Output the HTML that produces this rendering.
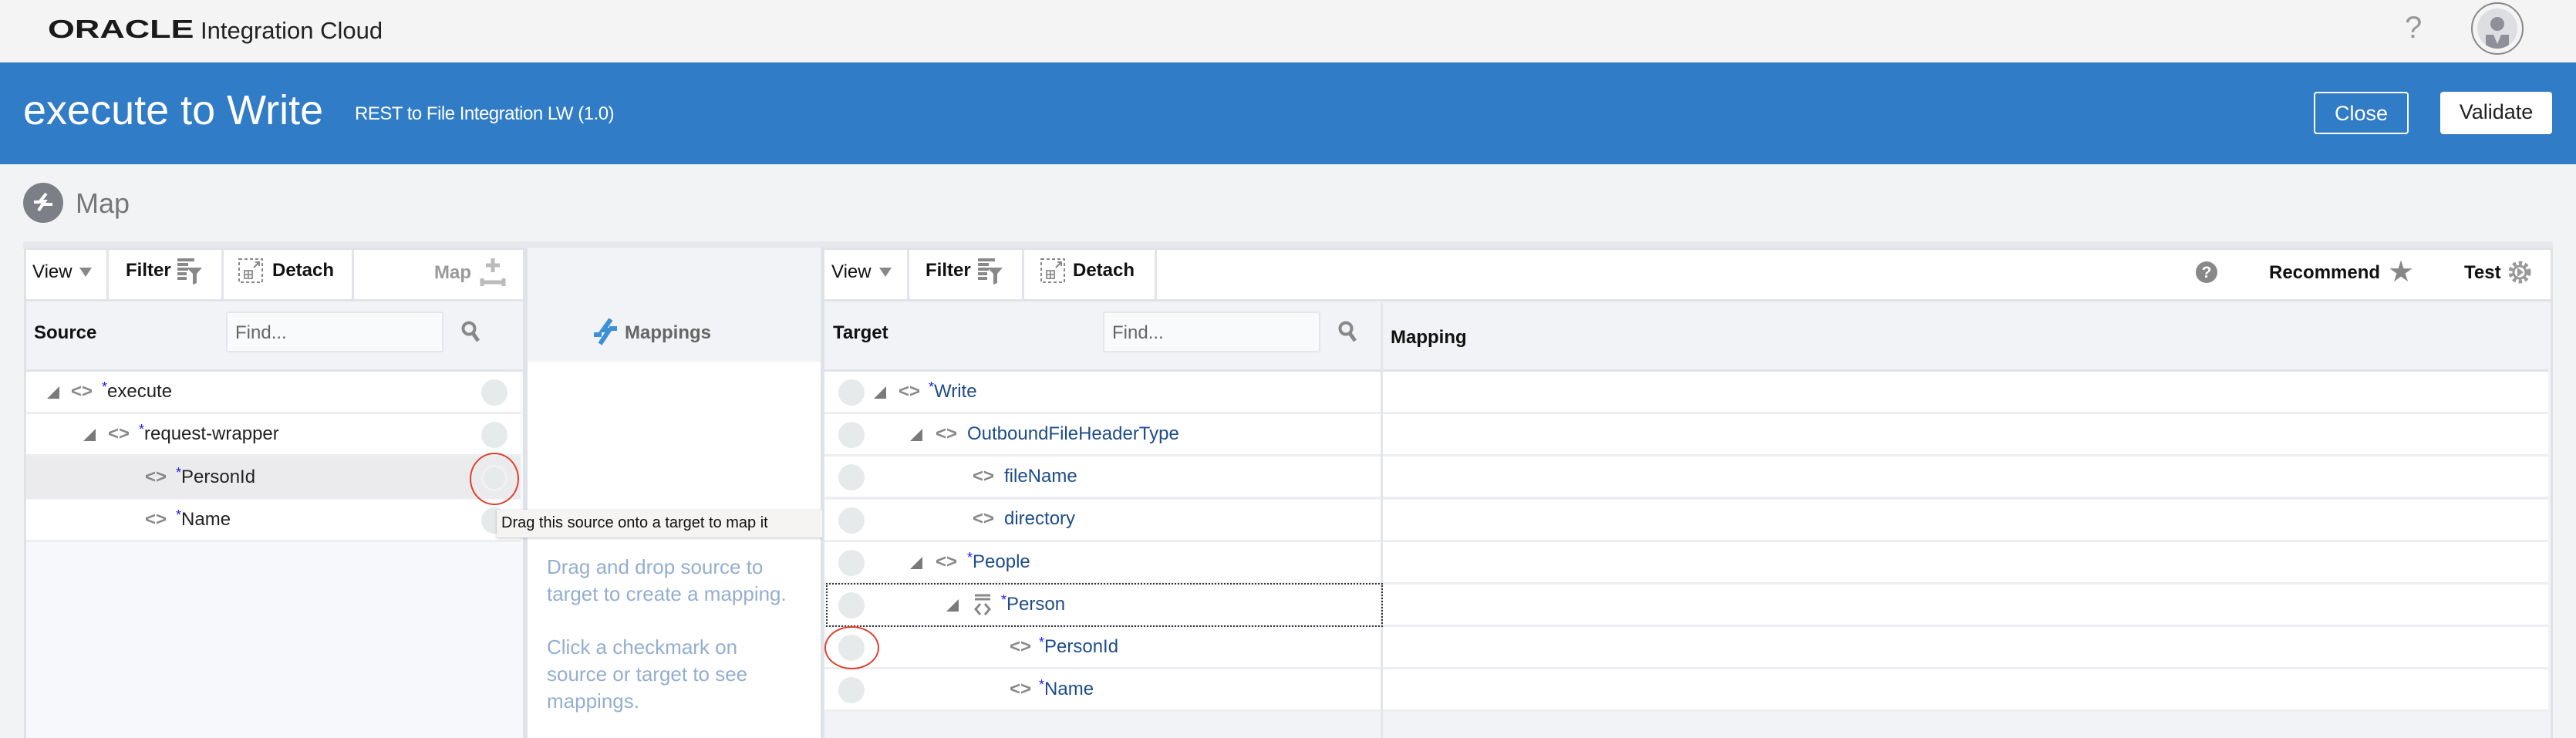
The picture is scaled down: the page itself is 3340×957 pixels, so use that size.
<!DOCTYPE html>
<html><head><meta charset="utf-8"><style>
*{margin:0;padding:0;box-sizing:border-box}
body{width:3340px;height:957px;overflow:hidden;background:#f2f3f5;font-family:"Liberation Sans",Arial,sans-serif;position:relative}
.a{position:absolute;white-space:nowrap}
.top{left:0;top:0;width:3340px;height:81px;background:#f4f4f4}
.blue{left:0;top:81px;width:3340px;height:132px;background:#307cc7}
.btn{border-radius:4px;font-size:27px;text-align:center;line-height:53px}
.tb{font-size:24px;font-weight:bold;color:#111}
.row{height:55px;border-bottom:3px solid #eceef1;background:#fff}
.lbl{font-size:24px;color:#222}
.blbl{font-size:24px;color:#1d4c8a}
.ast{color:#1a1aff;font-size:18px;vertical-align:top;position:relative;top:-2px}
.dot{width:34px;height:34px;border-radius:50%;background:#e6eaeb}
.tri{width:0;height:0;border-left:16px solid transparent;border-bottom:16px solid #7a7a7a}
.help{font-size:26px;color:#94aed0;line-height:35px}
</style></head><body>
<div class="a top"></div>
<div class="a" style="left:62px;top:19px;font-size:33px;font-weight:bold;color:#1a1a1a;transform:scaleX(1.36);transform-origin:left">ORACLE</div>
<div class="a" style="left:260px;top:22px;font-size:31px;color:#222">Integration Cloud</div>
<div class="a" style="left:3118px;top:14px;font-size:40px;color:#999">?</div>
<div class="a" style="left:3204px;top:3px;width:68px;height:68px;border-radius:50%;border:2px solid #888;background:#f4f4f4"></div>
<div class="a" style="left:3212px;top:11px;width:52px;height:52px;border-radius:50%;background:#dcdee2;overflow:hidden">
<svg width="52" height="52"><circle cx="26" cy="20" r="9" fill="#8e8f99"/><path d="M11 34 H41 V52 H11Z" fill="#8e8f99"/><path d="M21 34 L26 46 L31 34Z" fill="#dcdee2"/></svg></div>

<div class="a blue"></div>
<div class="a" style="left:30px;top:112px;font-size:54px;color:#fff">execute to Write</div>
<div class="a" style="left:460px;top:134px;font-size:24px;color:#fff;letter-spacing:-0.5px">REST to File Integration LW (1.0)</div>
<div class="a btn" style="left:3000px;top:119px;width:123px;height:55px;border:2px solid #fff;color:#fff">Close</div>
<div class="a btn" style="left:3164px;top:119px;width:145px;height:55px;background:#fff;color:#222">Validate</div>

<div class="a" style="left:30px;top:237px;width:52px;height:52px;border-radius:50%;background:#7c7f85"></div>
<svg class="a" style="left:30px;top:237px" width="52" height="52"><path d="M30 14 L22 24 L28 24 L20 36 M14 25 H24 M26 28 H38" stroke="#fff" stroke-width="4" fill="none"/></svg>
<div class="a" style="left:98px;top:243px;font-size:36px;color:#777">Map</div>

<div class="a" style="left:30px;top:313px;width:3280px;height:10px;background:#e6e8eb"></div>

<!-- LEFT PANEL -->
<div class="a" style="left:31px;top:321px;width:650px;height:636px;background:#f7f8fb;border:3px solid #dfe3e8;border-bottom:none"></div>
<div class="a" style="left:34px;top:324px;width:644px;height:67px;background:#fff;border-bottom:3px solid #dfe3e8"></div>
<div class="a" style="left:138px;top:324px;width:3px;height:67px;background:#e1e4e9"></div>
<div class="a" style="left:287px;top:324px;width:3px;height:67px;background:#e1e4e9"></div>
<div class="a" style="left:456px;top:324px;width:3px;height:67px;background:#e1e4e9"></div>
<div class="a" style="left:42px;top:339px;font-size:24px;color:#111">View</div>
<div class="a" style="left:103px;top:347px;border-left:8px solid transparent;border-right:8px solid transparent;border-top:12px solid #888"></div>
<div class="a tb" style="left:163px;top:337px">Filter</div>
<svg class="a" style="left:230px;top:335px" width="32" height="34"><path d="M0 2H22M0 8H14M0 14H14M0 20H12M0 26H12" stroke="#888" stroke-width="4"/><path d="M12 12H32L25 20V32L20 34V20Z" fill="#888"/></svg>
<svg class="a" style="left:309px;top:335px" width="32" height="32"><rect x="1" y="1" width="30" height="30" fill="none" stroke="#888" stroke-width="2" stroke-dasharray="4 3"/><path d="M8 16H18V26H8Z M13 16V26 M8 21H18" stroke="#999" stroke-width="2" fill="none"/><path d="M20 12 L27 5 M22 5H27V10" stroke="#888" stroke-width="2" fill="none"/></svg>
<div class="a tb" style="left:353px;top:337px">Detach</div>
<div class="a tb" style="left:563px;top:340px;color:#999">Map</div>
<svg class="a" style="left:622px;top:333px" width="34" height="40"><path d="M17 2V20M8 11H26" stroke="#bbb" stroke-width="5"/><path d="M3 28V38M31 28V38M3 33H31" stroke="#bbb" stroke-width="5"/></svg>
<div class="a" style="left:34px;top:392px;width:644px;height:90px;background:#f1f3f6;border-bottom:3px solid #dfe3e8"></div>
<div class="a tb" style="left:44px;top:418px">Source</div>
<div class="a" style="left:293px;top:404px;width:282px;height:53px;background:#f9fafc;border:2px solid #e3e6ea;border-radius:3px;font-size:24px;color:#666;padding:12px 0 0 10px">Find...</div>
<svg class="a" style="left:598px;top:416px" width="26" height="30"><circle cx="10" cy="10" r="7.5" stroke="#888" stroke-width="4" fill="none"/><path d="M15 16L22 26" stroke="#888" stroke-width="5"/></svg>
<div class="a row" style="left:34px;top:482px;width:641px"></div>
<div class="a row" style="left:34px;top:537px;width:641px"></div>
<div class="a row" style="left:34px;top:592px;width:641px;background:#ebebed;border-bottom-color:#ebebed"></div>
<div class="a row" style="left:34px;top:648px;width:641px"></div>
<div class="a dot" style="left:624px;top:492px"></div>
<div class="a dot" style="left:624px;top:547px"></div>
<div class="a dot" style="left:624px;top:603px;border:3px solid #f0f1f2"></div>
<div class="a dot" style="left:624px;top:658px"></div>
<div class="a" style="left:609px;top:587px;width:64px;height:68px;border:2px solid #e0402c;border-radius:50%"></div>

<div class="a tri" style="left:61px;top:501px"></div>
<div class="a" style="left:92px;top:494px;font-size:24px;color:#888;font-weight:bold">&lt;&gt;</div>
<div class="a lbl" style="left:132px;top:494px"><span class="ast">*</span>execute</div>
<div class="a tri" style="left:108px;top:556px"></div>
<div class="a" style="left:140px;top:549px;font-size:24px;color:#888;font-weight:bold">&lt;&gt;</div>
<div class="a lbl" style="left:180px;top:549px"><span class="ast">*</span>request-wrapper</div>
<div class="a" style="left:188px;top:605px;font-size:24px;color:#888;font-weight:bold">&lt;&gt;</div>
<div class="a lbl" style="left:228px;top:605px"><span class="ast">*</span>PersonId</div>
<div class="a" style="left:188px;top:660px;font-size:24px;color:#888;font-weight:bold">&lt;&gt;</div>
<div class="a lbl" style="left:228px;top:660px"><span class="ast">*</span>Name</div>

<!-- MIDDLE -->
<div class="a" style="left:681px;top:321px;width:386px;height:636px;background:#fff;border-left:3px solid #dfe3e8;border-right:3px solid #dfe3e8"></div>
<div class="a" style="left:684px;top:321px;width:380px;height:148px;background:#f1f3f6"></div>
<svg class="a" style="left:768px;top:412px" width="34" height="36"><path d="M24 2 L14 16 H22 L10 34" stroke="#3d8fd8" stroke-width="6" fill="none"/><path d="M2 22H12M22 14H32" stroke="#3d8fd8" stroke-width="6"/></svg>
<div class="a tb" style="left:810px;top:418px;color:#666">Mappings</div>
<div class="a help" style="left:709px;top:718px">Drag and drop source to<br>target to create a mapping.</div>
<div class="a help" style="left:709px;top:822px">Click a checkmark on<br>source or target to see<br>mappings.</div>
<div class="a" style="left:644px;top:661px;width:423px;height:36px;background:#f6f4f3;box-shadow:0 1px 3px rgba(0,0,0,.25);font-size:20px;color:#111;padding:6px 0 0 6px">Drag this source onto a target to map it</div>

<!-- RIGHT PANEL -->
<div class="a" style="left:1066px;top:321px;width:2244px;height:636px;background:#f2f3f6;border:3px solid #dfe3e8;border-bottom:none"></div>
<div class="a" style="left:1069px;top:324px;width:2238px;height:67px;background:#fff;border-bottom:3px solid #dfe3e8"></div>
<div class="a" style="left:1176px;top:324px;width:3px;height:67px;background:#e1e4e9"></div>
<div class="a" style="left:1325px;top:324px;width:3px;height:67px;background:#e1e4e9"></div>
<div class="a" style="left:1497px;top:324px;width:3px;height:67px;background:#e1e4e9"></div>
<div class="a" style="left:1078px;top:339px;font-size:24px;color:#111">View</div>
<div class="a" style="left:1140px;top:347px;border-left:8px solid transparent;border-right:8px solid transparent;border-top:12px solid #888"></div>
<div class="a tb" style="left:1200px;top:337px">Filter</div>
<svg class="a" style="left:1268px;top:335px" width="32" height="34"><path d="M0 2H22M0 8H14M0 14H14M0 20H12M0 26H12" stroke="#888" stroke-width="4"/><path d="M12 12H32L25 20V32L20 34V20Z" fill="#888"/></svg>
<svg class="a" style="left:1349px;top:335px" width="32" height="32"><rect x="1" y="1" width="30" height="30" fill="none" stroke="#888" stroke-width="2" stroke-dasharray="4 3"/><path d="M8 16H18V26H8Z M13 16V26 M8 21H18" stroke="#999" stroke-width="2" fill="none"/><path d="M20 12 L27 5 M22 5H27V10" stroke="#888" stroke-width="2" fill="none"/></svg>
<div class="a tb" style="left:1391px;top:337px">Detach</div>
<div class="a" style="left:2847px;top:339px;width:28px;height:28px;border-radius:50%;background:#888;color:#fff;font-size:21px;font-weight:bold;text-align:center;line-height:29px">?</div>
<div class="a tb" style="left:2942px;top:340px">Recommend</div>
<div class="a" style="left:3096px;top:330px;font-size:38px;color:#888">★</div>
<div class="a tb" style="left:3195px;top:340px">Test</div>
<svg class="a" style="left:3251px;top:337px" width="32" height="32"><circle cx="16" cy="16" r="11" fill="none" stroke="#999" stroke-width="7" stroke-dasharray="4 3.2"/><circle cx="16" cy="16" r="8" fill="none" stroke="#999" stroke-width="3"/><path d="M13 10L21 16L13 22Z" fill="#999"/></svg>
<div class="a" style="left:1069px;top:392px;width:2235px;height:90px;background:#f1f3f6;border-bottom:3px solid #dfe3e8"></div>
<div class="a" style="left:1790px;top:392px;width:3px;height:565px;background:#e3e6ea"></div>
<div class="a tb" style="left:1080px;top:418px">Target</div>
<div class="a" style="left:1430px;top:404px;width:282px;height:53px;background:#f9fafc;border:2px solid #e3e6ea;border-radius:3px;font-size:24px;color:#666;padding:12px 0 0 10px">Find...</div>
<svg class="a" style="left:1735px;top:416px" width="26" height="30"><circle cx="10" cy="10" r="7.5" stroke="#888" stroke-width="4" fill="none"/><path d="M15 16L22 26" stroke="#888" stroke-width="5"/></svg>
<div class="a tb" style="left:1803px;top:424px">Mapping</div>
<div class="a row" style="left:1069px;top:482px;width:721px"></div>
<div class="a row" style="left:1069px;top:537px;width:721px"></div>
<div class="a row" style="left:1069px;top:592px;width:721px"></div>
<div class="a row" style="left:1069px;top:648px;width:721px"></div>
<div class="a row" style="left:1069px;top:703px;width:721px"></div>
<div class="a row" style="left:1069px;top:758px;width:721px"></div>
<div class="a row" style="left:1069px;top:813px;width:721px"></div>
<div class="a row" style="left:1069px;top:868px;width:721px"></div>
<div class="a row" style="left:1793px;top:482px;width:1511px"></div>
<div class="a row" style="left:1793px;top:537px;width:1511px"></div>
<div class="a row" style="left:1793px;top:592px;width:1511px"></div>
<div class="a row" style="left:1793px;top:648px;width:1511px"></div>
<div class="a row" style="left:1793px;top:703px;width:1511px"></div>
<div class="a row" style="left:1793px;top:758px;width:1511px"></div>
<div class="a row" style="left:1793px;top:813px;width:1511px"></div>
<div class="a row" style="left:1793px;top:868px;width:1511px"></div>
<div class="a" style="left:1071px;top:756px;width:722px;height:57px;border:2px dotted #333"></div>

<div class="a dot" style="left:1087px;top:492px"></div>
<div class="a dot" style="left:1087px;top:547px"></div>
<div class="a dot" style="left:1087px;top:602px"></div>
<div class="a dot" style="left:1087px;top:658px"></div>
<div class="a dot" style="left:1087px;top:713px"></div>
<div class="a dot" style="left:1087px;top:768px"></div>
<div class="a dot" style="left:1087px;top:823px"></div>
<div class="a dot" style="left:1087px;top:878px"></div>
<div class="a" style="left:1069px;top:812px;width:71px;height:56px;border:2px solid #e0402c;border-radius:50%"></div>

<div class="a tri" style="left:1133px;top:501px"></div>
<div class="a" style="left:1165px;top:494px;font-size:24px;color:#888;font-weight:bold">&lt;&gt;</div>
<div class="a blbl" style="left:1204px;top:494px"><span class="ast">*</span>Write</div>
<div class="a tri" style="left:1180px;top:556px"></div>
<div class="a" style="left:1213px;top:549px;font-size:24px;color:#888;font-weight:bold">&lt;&gt;</div>
<div class="a blbl" style="left:1254px;top:549px">OutboundFileHeaderType</div>
<div class="a" style="left:1261px;top:604px;font-size:24px;color:#888;font-weight:bold">&lt;&gt;</div>
<div class="a blbl" style="left:1302px;top:604px">fileName</div>
<div class="a" style="left:1261px;top:659px;font-size:24px;color:#888;font-weight:bold">&lt;&gt;</div>
<div class="a blbl" style="left:1302px;top:659px">directory</div>
<div class="a tri" style="left:1180px;top:722px"></div>
<div class="a" style="left:1213px;top:715px;font-size:24px;color:#888;font-weight:bold">&lt;&gt;</div>
<div class="a blbl" style="left:1254px;top:715px"><span class="ast">*</span>People</div>
<div class="a tri" style="left:1227px;top:777px"></div>
<svg class="a" style="left:1262px;top:770px" width="24" height="30"><path d="M2 2H22M2 7H22" stroke="#888" stroke-width="3"/><path d="M9 13L3 20L9 27M15 13L21 20L15 27" stroke="#888" stroke-width="3" fill="none"/></svg>
<div class="a blbl" style="left:1298px;top:770px"><span class="ast">*</span>Person</div>
<div class="a" style="left:1309px;top:825px;font-size:24px;color:#888;font-weight:bold">&lt;&gt;</div>
<div class="a blbl" style="left:1347px;top:825px"><span class="ast">*</span>PersonId</div>
<div class="a" style="left:1309px;top:880px;font-size:24px;color:#888;font-weight:bold">&lt;&gt;</div>
<div class="a blbl" style="left:1347px;top:880px"><span class="ast">*</span>Name</div>
</body></html>
